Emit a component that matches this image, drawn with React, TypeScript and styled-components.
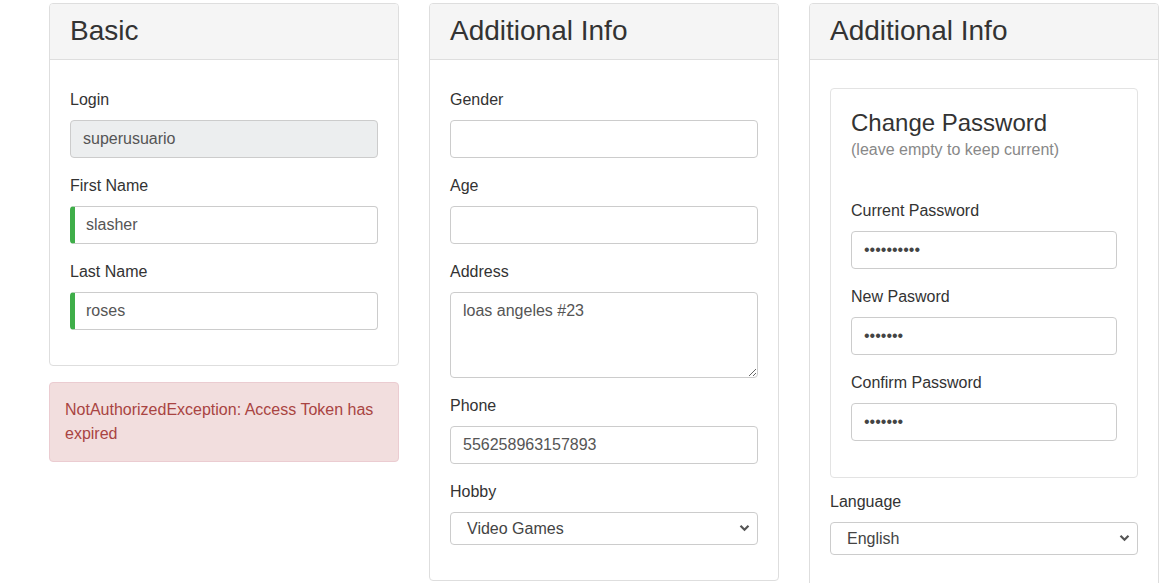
import React from "react";
import styled, { createGlobalStyle, css } from "styled-components";

const GlobalStyle = createGlobalStyle`
  * { box-sizing: border-box; }
  body {
    margin: 0;
    background: #fff;
    font-family: "Liberation Sans", Arial, sans-serif;
    font-size: 16px;
    line-height: 1.5;
    color: #333;
  }
`;

const Page = styled.div`
  display: grid;
  grid-template-columns: repeat(3, 350px);
  column-gap: 30px;
  align-items: start;
  padding: 3px 0 0 49px;
`;

const Column = styled.div`
  display: flex;
  flex-direction: column;
  gap: 16px;
`;

const Card = styled.div<{ $inner?: boolean }>`
  background: #fff;
  border: 1px solid #dedede;
  border-radius: 4px;
  ${({ $inner }) =>
    $inner &&
    css`
      border-color: #e3e3e3;
      padding: 20px 20px 20px;
      margin-bottom: 12px;
    `}
`;

const CardHeader = styled.div`
  background: #f5f5f5;
  border-bottom: 1px solid #dedede;
  padding: 10px 20px 12px;
  border-radius: 3px 3px 0 0;
`;

const Title = styled.h2`
  margin: 0;
  font-size: 28px;
  font-weight: 400;
  line-height: 33px;
  color: #333;
`;

const CardBody = styled.div<{ $tall?: boolean }>`
  padding: 28px 20px 19px;
  ${({ $tall }) =>
    $tall &&
    css`
      min-height: 540px;
    `}
`;

const SubTitle = styled.h3`
  margin: 0 0 2px;
  font-size: 24px;
  font-weight: 400;
  line-height: 27px;
  color: #333;
`;

const Hint = styled.div`
  color: #888;
  font-size: 16px;
  line-height: 24px;
  margin-bottom: 37px;
`;

const Group = styled.div`
  margin-bottom: 16px;
`;

const Label = styled.label`
  display: block;
  margin-bottom: 8px;
  line-height: 24px;
  color: #333;
`;

const fieldBase = css`
  display: block;
  width: 100%;
  font-family: inherit;
  font-size: 16px;
  color: #555;
  background: #fff;
  border: 1px solid #ccc;
  border-radius: 4px;
  outline: none;
`;

const Input = styled.input<{ $valid?: boolean }>`
  ${fieldBase}
  height: 38px;
  padding: 6px 12px;
  &:disabled {
    background: #eceeef;
    color: #555;
  }
  ${({ $valid }) =>
    $valid &&
    css`
      border-left: 5px solid #3fae49;
      padding-left: 11px;
    `}
`;

const Password = styled(Input)`
  font-size: 16px;
  padding-left: 12px;
  color: #444;
`;

const TextArea = styled.textarea`
  ${fieldBase}
  height: 86px;
  padding: 6px 12px;
  line-height: 24px;
  resize: vertical;
`;

const SelectWrap = styled.div`
  position: relative;
`;

const Select = styled.select`
  ${fieldBase}
  appearance: none;
  height: 33px;
  padding: 0 30px 0 16px;
  color: #444;
`;

const Chevron = styled.svg`
  position: absolute;
  right: 8px;
  top: 12px;
  pointer-events: none;
`;

const Alert = styled.div`
  background: #f2dede;
  border: 1px solid #ebccd1;
  border-radius: 4px;
  color: #a94442;
  padding: 15px 15px;
  line-height: 24px;
`;

type SelectFieldProps = { label: string; value: string };

const SelectField = ({ label, value }: SelectFieldProps) => (
  <Group>
    <Label>{label}</Label>
    <SelectWrap>
      <Select defaultValue={value}>
        <option>{value}</option>
      </Select>
      <Chevron width="11" height="8" viewBox="0 0 11 8">
        <path d="M1.5 1.8 L5.5 5.8 L9.5 1.8" fill="none" stroke="#555" strokeWidth="2.2" />
      </Chevron>
    </SelectWrap>
  </Group>
);

export default function App() {
  return (
    <>
      <GlobalStyle />
      <Page>
        <Column>
          <Card>
            <CardHeader>
              <Title>Basic</Title>
            </CardHeader>
            <CardBody>
              <Group>
                <Label>Login</Label>
                <Input disabled defaultValue="superusuario" />
              </Group>
              <Group>
                <Label>First Name</Label>
                <Input $valid defaultValue="slasher" />
              </Group>
              <Group>
                <Label>Last Name</Label>
                <Input $valid defaultValue="roses" />
              </Group>
            </CardBody>
          </Card>
          <Alert>NotAuthorizedException: Access Token has expired</Alert>
        </Column>

        <Column>
          <Card>
            <CardHeader>
              <Title>Additional Info</Title>
            </CardHeader>
            <CardBody>
              <Group>
                <Label>Gender</Label>
                <Input />
              </Group>
              <Group>
                <Label>Age</Label>
                <Input />
              </Group>
              <Group>
                <Label>Address</Label>
                <TextArea defaultValue="loas angeles #23" />
              </Group>
              <Group>
                <Label>Phone</Label>
                <Input defaultValue="556258963157893" />
              </Group>
              <SelectField label="Hobby" value="Video Games" />
            </CardBody>
          </Card>
        </Column>

        <Column>
          <Card>
            <CardHeader>
              <Title>Additional Info</Title>
            </CardHeader>
            <CardBody $tall>
              <Card $inner>
                <SubTitle>Change Password</SubTitle>
                <Hint>(leave empty to keep current)</Hint>
                <Group>
                  <Label>Current Password</Label>
                  <Password type="password" defaultValue="0123456789" />
                </Group>
                <Group>
                  <Label>New Pasword</Label>
                  <Password type="password" defaultValue="1234567" />
                </Group>
                <Group>
                  <Label>Confirm Password</Label>
                  <Password type="password" defaultValue="1234567" />
                </Group>
              </Card>
              <SelectField label="Language" value="English" />
            </CardBody>
          </Card>
        </Column>
      </Page>
    </>
  );
}
